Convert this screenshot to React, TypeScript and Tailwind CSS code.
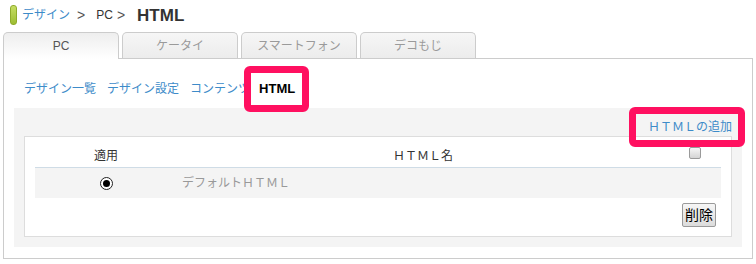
import React from "react";

const Tab = ({ label, active }: { label: string; active?: boolean }) =>
  active ? (
    <div className="w-[116px] h-[27px] flex items-center justify-center rounded-t-[5px] border border-b-0 border-[#cccccc] bg-gradient-to-b from-[#eeeeee] to-white text-[12px] text-[#555555] leading-none">
      {label}
    </div>
  ) : (
    <div className="w-[116px] h-[26px] mb-px flex items-center justify-center rounded-t-[5px] border border-b-0 border-[#cccccc] bg-gradient-to-b from-[#f6f6f6] to-[#ececec] text-[12px] text-[#9a9a9a] leading-none">
      {label}
    </div>
  );

export default function App() {
  return (
    <div
      className="w-[756px] h-[264px] bg-white relative overflow-hidden"
      style={{ fontFamily: '"Liberation Sans", "Noto Sans CJK JP", sans-serif' }}
    >
      {/* breadcrumb */}
      <div className="h-[30px] pl-[10px] flex items-center">
        <div className="w-[7px] h-[20px] rounded-[3px] border border-[#8fab2c] bg-gradient-to-b from-[#c6de62] to-[#9dbd32]" />
        <span className="ml-[5px] text-[12px] leading-none text-[#3d8bc9]">デザイン</span>
        <span className="ml-[7px] text-[14px] leading-none text-[#555555]">&gt;</span>
        <span className="ml-[11px] text-[12px] leading-none text-[#333333]">PC</span>
        <span className="ml-[4px] text-[14px] leading-none text-[#555555]">&gt;</span>
        <span className="ml-[12px] text-[17px] leading-none font-bold text-[#333333]">HTML</span>
      </div>

      {/* tabs */}
      <div className="mt-[2px] pl-[3px] flex items-end gap-[3px] relative z-10 -mb-px">
        <Tab label="PC" active />
        <Tab label="ケータイ" />
        <Tab label="スマートフォン" />
        <Tab label="デコもじ" />
      </div>

      {/* panel */}
      <div className="ml-[3px] w-[750px] h-[201px] border border-[#cccccc] bg-white">
        {/* sub nav */}
        <div className="h-[49px] pt-[10px] pl-[20px] flex items-center gap-[11px] text-[12px] leading-[16px] text-[#3d8bc9]">
          <span>デザイン一覧</span>
          <span>デザイン設定</span>
          <span>コンテンツ</span>
          <span className="relative ml-[-2px]">
            <span className="absolute left-[-15px] right-[-14px] top-[-15px] bottom-[-15px] border-[7px] border-[#ff1060] rounded-[6px] bg-white" />
            <span className="relative z-10 text-[13px] font-bold text-black">HTML</span>
          </span>
        </div>

        {/* gray area */}
        <div className="ml-[10px] w-[728px] h-[139px] bg-[#f4f4f4]">
          <div className="h-[28px] pt-[10px] pr-[10px] flex items-center justify-end">
            <span className="relative text-[12px] leading-[16px] text-[#3d8bc9]">
              <span className="absolute left-[-19px] right-[-13px] top-[-12px] bottom-[-12px] border-[7px] border-[#ff1060] rounded-[6px] z-10" />
              ＨＴＭＬの追加
            </span>
          </div>

          <div className="ml-[10px] w-[708px] h-[101px] border border-[#dddddd] bg-white px-[10px]">
            {/* header */}
            <div className="mt-[8px] h-[23px] flex border-b border-[#cfdce6] text-[12px] leading-none text-[#333333]">
              <div className="w-[142px] flex items-center justify-center">適用</div>
              <div className="w-[492px] flex items-center justify-center">ＨＴＭＬ名</div>
              <div className="w-[52px] flex justify-center pt-[2px]">
                <div className="w-[12px] h-[12px] rounded-[2px] border border-[#9a9a9a] bg-gradient-to-b from-[#f6f6f6] to-[#d4d4d4]" />
              </div>
            </div>
            {/* row */}
            <div className="h-[30px] flex bg-[#f4f4f4] text-[12px] leading-none">
              <div className="w-[142px] flex items-center justify-center">
                <div className="w-[13px] h-[13px] rounded-full border border-[#222222] bg-white flex items-center justify-center">
                  <div className="w-[7px] h-[7px] rounded-full bg-black" />
                </div>
              </div>
              <div className="flex items-center pl-[5px] text-[#999999]">デフォルトＨＴＭＬ</div>
            </div>
            {/* button */}
            <div className="mt-[5px] pr-[5px] flex justify-end">
              <div className="w-[34px] h-[24px] flex items-center justify-center rounded-[2px] border border-[#9a9a9a] bg-gradient-to-b from-[#f6f6f6] to-[#dcdcdc] text-[14px] leading-none text-black">
                削除
              </div>
            </div>
          </div>
        </div>
      </div>
    </div>
  );
}
